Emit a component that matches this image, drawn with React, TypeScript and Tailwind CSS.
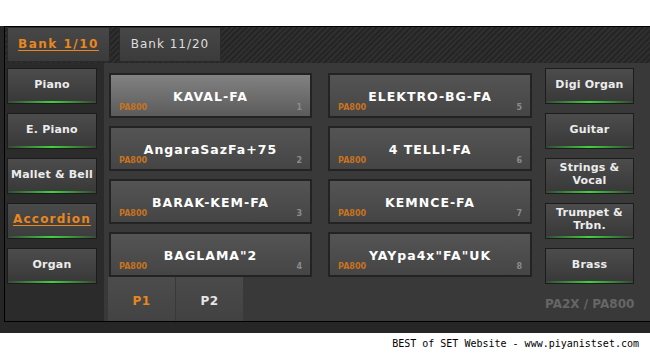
import React from 'react';

const leftCats = ['Piano', 'E. Piano', 'Mallet & Bell', 'Accordion', 'Organ'];
const rightCats = ['Digi Organ', 'Guitar', 'Strings &\nVocal', 'Trumpet &\nTrbn.', 'Brass'];

// pads listed row by row: left column 1-4, right column 5-8
const pads = [
  { name: 'KAVAL-FA', num: 1 },
  { name: 'ELEKTRO-BG-FA', num: 5 },
  { name: 'AngaraSazFa+75', num: 2 },
  { name: '4 TELLI-FA', num: 6 },
  { name: 'BARAK-KEM-FA', num: 3 },
  { name: 'KEMNCE-FA', num: 7 },
  { name: 'BAGLAMA"2', num: 4 },
  { name: 'YAYpa4x"FA"UK', num: 8 },
];

const CategoryButton: React.FC<{ label: string; active?: boolean; wide?: boolean }> = ({ label, active, wide }) => (
  <div
    className={`flex flex-col h-[36px] ${wide ? 'w-[89px]' : 'w-[90px]'} border border-[#1c1c1c] ${
      active
        ? 'bg-[linear-gradient(180deg,#4a4a4a,#3c3c3c)]'
        : 'bg-[linear-gradient(180deg,#4c4c4c,#383838)]'
    }`}
  >
    <div className="flex-1 flex items-center justify-center text-center pb-[2px]">
      {active ? (
        <span className="text-[12px] font-bold tracking-[1.2px] text-[#e8861f] underline underline-offset-2">{label}</span>
      ) : (
        <span className="text-[11px] font-bold tracking-[0.2px] leading-[13px] text-[#ececec] whitespace-pre-line">{label}</span>
      )}
    </div>
    <div className="h-[2px] bg-[linear-gradient(90deg,rgba(40,160,40,0.15),#3fd23f_50%,rgba(40,160,40,0.15))]" />
  </div>
);

const Pad: React.FC<{ name: string; num: number; selected?: boolean }> = ({ name, num, selected }) => (
  <div
    className={`relative h-[45px] border-2 border-[#232323] flex items-center justify-center pt-[2px] ${
      selected
        ? 'bg-[linear-gradient(180deg,#828282,#5b5b5b)]'
        : 'bg-[linear-gradient(180deg,#545454,#454545)]'
    }`}
  >
    <span className="text-[12.5px] font-bold tracking-[1px] text-white leading-[14px]">{name}</span>
    <span className="absolute left-[8px] bottom-[4px] text-[8px] leading-[8px] font-bold text-[#c8731f]">PA800</span>
    <span className="absolute right-[8px] bottom-[4px] text-[8px] leading-[8px] font-bold text-[#8c8c8c]">{num}</span>
  </div>
);

const App: React.FC = () => {
  return (
    <div className="w-[650px] h-[360px] bg-white font-['DejaVu_Sans',sans-serif] overflow-hidden">
      <div className="h-[26px]" />
      <div className="flex h-[307px] bg-[#262626] pl-[4px] pr-[13px] pb-[11px]">
        <div className="flex-1 flex flex-col border border-black">
          {/* Bank tabs */}
          <div className="flex gap-[9px] pl-[2px] h-[36px] bg-[repeating-linear-gradient(135deg,#2f2f2f_0px,#2f2f2f_2px,#252525_2px,#252525_4px)]">
            <div className="w-[103px] h-[35px] flex items-center justify-center pb-[2px] bg-[linear-gradient(180deg,#474747,#3b3b3b)] border border-[#2a2a2a]">
              <span className="text-[12px] font-bold tracking-[1.5px] text-[#e8861f] underline underline-offset-2">Bank 1/10</span>
            </div>
            <div className="w-[102px] h-[35px] flex items-center justify-center pb-[2px] bg-[linear-gradient(180deg,#474747,#3b3b3b)] border border-[#2a2a2a]">
              <span className="text-[12px] tracking-[1px] text-[#dedede]">Bank 11/20</span>
            </div>
          </div>

          <div className="flex flex-1">
            {/* Left categories */}
            <div className="w-[99px] flex flex-col gap-[9px] pt-[5px] pl-[2px] bg-[#2b2b2b]">
              {leftCats.map((c) => (
                <CategoryButton key={c} label={c} active={c === 'Accordion'} />
              ))}
            </div>

            <div className="flex flex-1 bg-[#393939]">
              {/* Pads and pages */}
              <div className="w-[436px] flex flex-col">
                <div className="grid grid-cols-[203px_204px] gap-x-[16px] gap-y-[8px] pt-[10px] pl-[5px]">
                  {pads.map((p) => (
                    <Pad key={p.num} name={p.name} num={p.num} selected={p.num === 1} />
                  ))}
                </div>
                <div className="flex gap-[1px] pl-[4px] mt-auto h-[44px]">
                  <div className="w-[67px] flex items-center justify-center pt-[4px] bg-[linear-gradient(180deg,#4c4c4c,#434343)]">
                    <span className="text-[12px] font-bold tracking-[0.5px] text-[#e8861f]">P1</span>
                  </div>
                  <div className="w-[67px] flex items-center justify-center pt-[4px] bg-[linear-gradient(180deg,#4a4a4a,#424242)]">
                    <span className="text-[12px] font-bold tracking-[0.5px] text-[#e6e6e6]">P2</span>
                  </div>
                </div>
              </div>

              {/* Right categories */}
              <div className="flex-1 flex flex-col pt-[5px] pl-[5px]">
                <div className="flex flex-col gap-[9px]">
                  {rightCats.map((c) => (
                    <CategoryButton key={c} label={c} wide />
                  ))}
                </div>
                <div className="mt-auto mb-[11px] pr-[19px] flex justify-end">
                  <span className="whitespace-nowrap text-[12px] leading-[12px] font-bold text-[#666666]">PA2X / PA800</span>
                </div>
              </div>
            </div>
          </div>
        </div>
      </div>
      <div className="flex justify-end pr-[11px] pt-[5px]">
        <span className="font-['DejaVu_Sans_Mono',monospace] text-[10px] leading-[12px] text-black whitespace-pre">BEST of SET Website - www.piyanistset.com</span>
      </div>
    </div>
  );
};

export default App;
